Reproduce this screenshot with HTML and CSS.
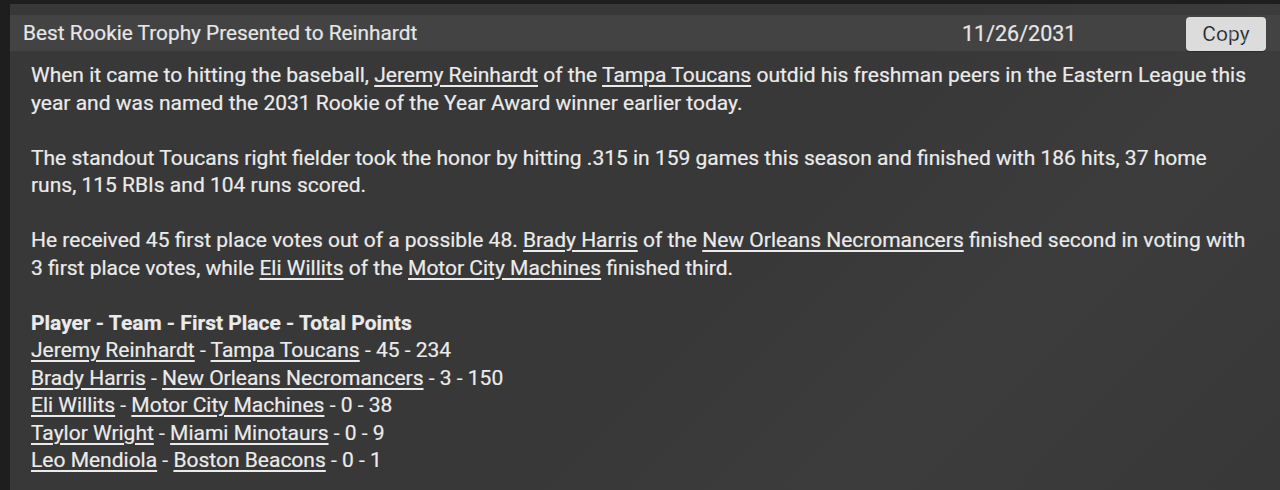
FILE: index.html
```html
<!DOCTYPE html>
<html>
<head>
<meta charset="utf-8">
<link rel="stylesheet" href="styles.css">
</head>
<body>
<div class="page">
  <div class="panel">
    <div class="header">
      <div class="title">Best Rookie Trophy Presented to Reinhardt</div>
      <div class="date">11/26/2031</div>
      <button class="copy">Copy</button>
    </div>
    <div class="body">
      <p>When it came to hitting the baseball, <a>Jeremy Reinhardt</a> of the <a>Tampa Toucans</a> outdid his freshman peers in the Eastern League this year and was named the 2031 Rookie of the Year Award winner earlier today.</p>
      <p>The standout Toucans right fielder took the honor by hitting .315 in 159 games this season and finished with 186 hits, 37 home runs, 115 RBIs and 104 runs scored.</p>
      <p>He received 45 first place votes out of a possible 48. <a>Brady Harris</a> of the <a>New Orleans Necromancers</a> finished second in voting with 3 first place votes, while <a>Eli Willits</a> of the <a>Motor City Machines</a> finished third.</p>
      <p><b>Player - Team - First Place - Total Points</b><br>
      <a>Jeremy Reinhardt</a> - <a>Tampa Toucans</a> - 45 - 234<br>
      <a>Brady Harris</a> - <a>New Orleans Necromancers</a> - 3 - 150<br>
      <a>Eli Willits</a> - <a>Motor City Machines</a> - 0 - 38<br>
      <a>Taylor Wright</a> - <a>Miami Minotaurs</a> - 0 - 9<br>
      <a>Leo Mendiola</a> - <a>Boston Beacons</a> - 0 - 1</p>
    </div>
  </div>
</div>
</body>
</html>
```
FILE: styles.css
```css
html, body {
  margin: 0;
  padding: 0;
  background: #1e1e1e;
}
body {
  width: 1280px;
  height: 490px;
  overflow: hidden;
  font-family: Roboto, "Liberation Sans", sans-serif;
}
.page {
  padding: 4px 0 0 10px;
  height: 486px;
}
.panel {
  height: 100%;
  background: linear-gradient(135deg, #383838 0%, #383838 55%, #3b3c3b 75%, #383838 100%);
  padding-top: 11px;
  box-sizing: border-box;
}
.header {
  display: flex;
  align-items: center;
  height: 36px;
  background: #434343;
  padding-left: 13px;
  color: #e6e6e6;
  font-size: 20.8px;
  -webkit-text-stroke: 0.2px #e6e6e6;
}
.title {
  flex: 1;
}
.date {
  width: 224px;
  font-size: 21.5px;
}
.copy {
  margin-right: 14px;
  width: 80px;
  height: 34px;
  border: none;
  border-radius: 4px;
  background: #dcdcdc;
  color: #1e1e1e;
  font-family: Roboto, "Liberation Sans", sans-serif;
  font-size: 21px;
  padding: 0;
  align-self: flex-start;
  margin-top: 2px;
  box-shadow: 0 1px 1px rgba(0,0,0,0.3);
}
.body {
  padding: 11px 30px 0 21px;
  color: #ebebeb;
  font-size: 21px;
  line-height: 27.5px;
  -webkit-text-stroke: 0.2px #ebebeb;
}
.body p {
  margin: 0 0 27.5px 0;
}
.body a {
  text-decoration: underline;
  text-decoration-thickness: 1.5px;
  text-underline-offset: 3px;
  color: #ebebeb;
}
.body b {
  font-weight: 700;
}
```
